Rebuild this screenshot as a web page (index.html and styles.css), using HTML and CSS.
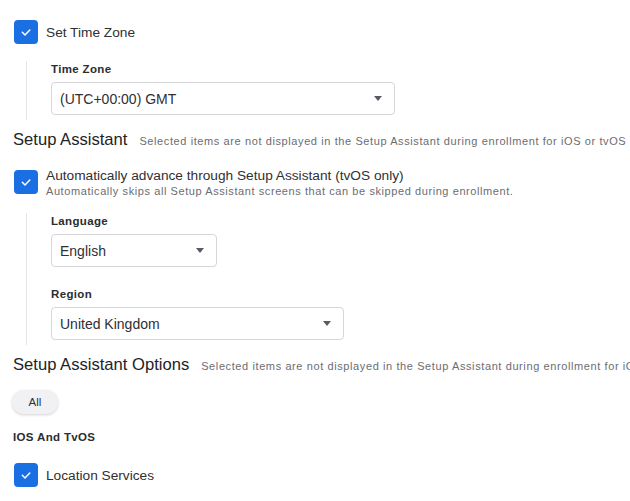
FILE: index.html
```html
<!DOCTYPE html>
<html>
<head>
<meta charset="utf-8">
<link rel="stylesheet" href="styles.css">
</head>
<body>
<div class="page">
  <div class="check-row">
    <span class="checkbox"><svg viewBox="0 0 24 24" width="24" height="24"><polyline points="8.3,12.3 11,15 15.8,10" fill="none" stroke="#fff" stroke-width="1.5" stroke-linecap="round" stroke-linejoin="round"/></svg></span>
    <span class="check-label">Set Time Zone</span>
  </div>
  <div class="indent first-indent">
    <div class="field-label">Time Zone</div>
    <div class="select wide"><span>(UTC+00:00) GMT</span><span class="arrow"></span></div>
  </div>

  <div class="heading"><span class="heading-title">Setup Assistant</span><span class="heading-sub">Selected items are not displayed in the Setup Assistant during enrollment for iOS or tvOS</span></div>

  <div class="check-row top">
    <span class="checkbox"><svg viewBox="0 0 24 24" width="24" height="24"><polyline points="8.3,12.3 11,15 15.8,10" fill="none" stroke="#fff" stroke-width="1.5" stroke-linecap="round" stroke-linejoin="round"/></svg></span>
    <div class="check-text">
      <div class="check-label">Automatically advance through Setup Assistant (tvOS only)</div>
      <div class="check-desc">Automatically skips all Setup Assistant screens that can be skipped during enrollment.</div>
    </div>
  </div>
  <div class="indent second-indent">
    <div class="field-label">Language</div>
    <div class="select narrow"><span>English</span><span class="arrow"></span></div>
    <div class="field-label spaced">Region</div>
    <div class="select medium"><span>United Kingdom</span><span class="arrow"></span></div>
  </div>

  <div class="heading"><span class="heading-title">Setup Assistant Options</span><span class="heading-sub">Selected items are not displayed in the Setup Assistant during enrollment for iOS or tvOS</span></div>

  <div class="pill-row"><span class="pill">All</span></div>

  <div class="group-label">IOS And TvOS</div>

  <div class="check-row last">
    <span class="checkbox"><svg viewBox="0 0 24 24" width="24" height="24"><polyline points="8.3,12.3 11,15 15.8,10" fill="none" stroke="#fff" stroke-width="1.5" stroke-linecap="round" stroke-linejoin="round"/></svg></span>
    <span class="check-label">Location Services</span>
  </div>
</div>
</body>
</html>
```

FILE: styles.css
```css
* { box-sizing: border-box; }
html, body { margin: 0; padding: 0; background: #fff; }
body {
  font-family: "Liberation Sans", Arial, sans-serif;
  color: #2f3033;
  width: 630px;
  height: 501px;
  overflow: hidden;
}
.page {
  padding: 20px 0 0 13px;
  white-space: nowrap;
}
.check-row {
  display: flex;
  align-items: center;
  gap: 8px;
  padding-left: 1px;
}
.check-row.top { align-items: flex-start; margin-top: 16px; }
.check-row.top .checkbox { margin-top: 3px; }
.check-row.last { margin-top: 19px; }
.checkbox {
  width: 24px;
  height: 24px;
  border-radius: 4px;
  background: #1a6fe3;
  flex: none;
  display: block;
}
.checkbox svg { display: block; }
.check-label {
  font-size: 13.7px;
  line-height: 17px;
  color: #2f3033;
}
.check-desc {
  font-size: 11px;
  line-height: 14px;
  letter-spacing: 0.58px;
  color: #6b6d72;
}
.indent {
  margin-left: 13px;
  border-left: 1px solid #e4e4e6;
  padding-left: 24px;
  padding-bottom: 5px;
}
.first-indent { margin-top: 17px; }
.second-indent { margin-top: 15px; }
.field-label {
  font-size: 11.5px;
  line-height: 14px;
  font-weight: bold;
  letter-spacing: 0.35px;
  color: #2b2c2f;
  padding-top: 1px;
}
.field-label.spaced { margin-top: 19px; }
.select {
  margin-top: 6px;
  height: 33px;
  border: 1px solid #d6d6da;
  border-radius: 4px;
  display: flex;
  align-items: center;
  justify-content: space-between;
  padding: 0 12px 0 8px;
  font-size: 14px;
  color: #2f3033;
}
.select.wide { width: 344px; }
.select.narrow { width: 166px; }
.select.medium { width: 293px; }
.arrow {
  width: 0;
  height: 0;
  border-left: 4px solid transparent;
  border-right: 4px solid transparent;
  border-top: 5px solid #565b66;
}
.heading {
  margin-top: 10px;
  line-height: 20px;
  display: flex;
  align-items: baseline;
  gap: 12px;
  overflow: hidden;
}
.heading-title {
  font-size: 16.6px;
  color: #222326;
}
.heading-sub {
  font-size: 11px;
  letter-spacing: 0.6px;
  color: #6b6d72;
}
.pill-row { margin-top: 14px; }
.pill {
  display: inline-flex;
  align-items: center;
  justify-content: center;
  width: 46px;
  height: 24px;
  margin-left: -1px;
  border-radius: 12px;
  background: #f1f1f4;
  box-shadow: 0 1px 3px rgba(0,0,0,0.18);
  font-size: 11.5px;
  color: #2f3033;
}
.group-label {
  margin-top: 16px;
  font-size: 11.5px;
  line-height: 14px;
  font-weight: bold;
  letter-spacing: 0.35px;
  color: #2b2c2f;
}
```
